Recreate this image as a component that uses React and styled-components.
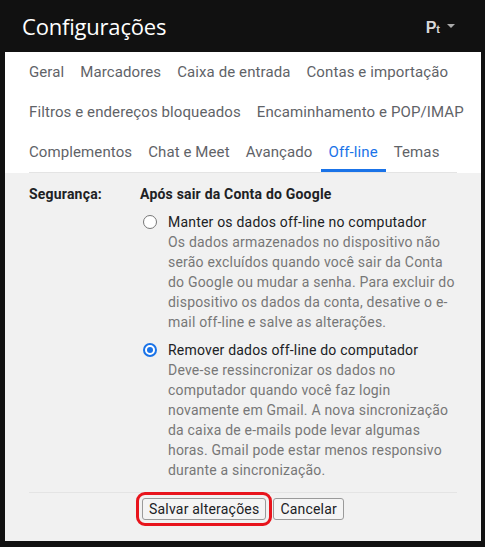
import React from "react"
import styled, { createGlobalStyle } from 'styled-components'

const GlobalStyle = createGlobalStyle`
    html, body {
        margin: 0;
        padding: 0;
        background: #111;
    }
    body {
        font-family: Roboto, 'Liberation Sans', Arial, sans-serif;
    }
`;

const Page = styled.div`
    width: 485px;
    height: 547px;
    background: #111;
    display: flex;
    flex-direction: column;
    box-sizing: border-box;
    padding: 0 4px 6px 5px;
`;

const Header = styled.header`
    height: 52px;
    flex-shrink: 0;
    display: flex;
    align-items: center;
    justify-content: space-between;
    padding: 0 26px 0 17px;
`;

const Title = styled.h1`
    margin: 0;
    font-family: 'Open Sans', Roboto, sans-serif;
    font-weight: 400;
    font-size: 22px;
    letter-spacing: -0.2px;
    color: #fff;
    padding-bottom: 1px;
`;

const Lang = styled.div`
    display: flex;
    align-items: center;
    gap: 7px;
    color: #d8d8d8;
    font-family: 'Liberation Sans', Arial, sans-serif;
    font-weight: 700;
    padding-top: 4px;
`;

const LangBig = styled.span`
    font-size: 16px;
`;

const LangSmall = styled.span`
    font-size: 11px;
`;

const Caret = styled.span`
    width: 0;
    height: 0;
    border-left: 4px solid transparent;
    border-right: 4px solid transparent;
    border-top: 4px solid #aaa;
    margin-top: -5px;
`;

const Panel = styled.main`
    flex: 1;
    display: flex;
    flex-direction: column;
    background: #f1f1f1;
`;

const TabBar = styled.div`
    background: #fff;
`;

const Tabs = styled.nav`
    display: flex;
    flex-wrap: wrap;
    padding: 0 8px 0 16px;
`;

const Tab = styled.a`
    height: 40px;
    box-sizing: border-box;
    display: flex;
    align-items: center;
    padding: 3px 8px 0;
    font-size: 15px;
    letter-spacing: 0.1px;
    color: ${props => props.active ? '#1a73e8' : '#5f6368'};
    border-bottom: 3px solid ${props => props.active ? '#1a73e8' : 'transparent'};
    text-decoration: none;
    white-space: nowrap;
    cursor: pointer;
`;

const Divider = styled.div`
    height: 1px;
    margin: 0 24px;
    background: #e4e4e4;
`;

const Content = styled.section`
    padding: 11px 24px 0;
    display: grid;
    grid-template-columns: 111px 1fr;
    font-size: 14px;
    line-height: 20px;
    letter-spacing: 0.2px;
    color: #202124;
`;

const Label = styled.div`
    font-weight: 700;
`;

const Options = styled.div`
    display: flex;
    flex-direction: column;
`;

const Heading = styled.div`
    font-weight: 700;
    margin-bottom: 8px;
`;

const Option = styled.label`
    display: grid;
    grid-template-columns: 28px 1fr;
    margin-bottom: 8px;
`;

const Radio = styled.span`
    width: 14px;
    height: 14px;
    box-sizing: border-box;
    border-radius: 50%;
    margin: 3px 0 0 3px;
    border: ${props => props.checked ? '2px solid #1a73e8' : '1px solid #767676'};
    background: #fff;
    display: flex;
    align-items: center;
    justify-content: center;

    &::after {
        content: '';
        display: ${props => props.checked ? 'block' : 'none'};
        width: 6px;
        height: 6px;
        border-radius: 50%;
        background: #1a73e8;
    }
`;

const OptionTitle = styled.div`
    color: #202124;
`;

const OptionText = styled.div`
    color: #777;
    width: 289px;
`;

const Footer = styled.div`
    margin: 4px 24px 0;
    border-top: 1px solid #e4e4e4;
    padding-top: 5px;
    display: flex;
    justify-content: center;
    gap: 7px;
`;

const Button = styled.button`
    height: 22px;
    padding: 0 6px;
    font-family: Roboto, 'Liberation Sans', Arial, sans-serif;
    font-size: 14px;
    letter-spacing: 0.2px;
    color: #202124;
    background: #f4f4f4;
    border: 1px solid #9a9a9a;
    border-radius: 3px;
    outline: ${props => props.highlight ? '3px solid #e8141c' : 'none'};
    outline-offset: 3px;
    cursor: pointer;
`;

const tabs = [
    'Geral', 'Marcadores', 'Caixa de entrada', 'Contas e importação',
    'Filtros e endereços bloqueados', 'Encaminhamento e POP/IMAP',
    'Complementos', 'Chat e Meet', 'Avançado', 'Off-line', 'Temas'
]

export default function App() {
    return (
        <Page>
            <GlobalStyle />
            <Header>
                <Title>Configurações</Title>
                <Lang>
                    <span><LangBig>P</LangBig><LangSmall>t</LangSmall></span>
                    <Caret />
                </Lang>
            </Header>
            <Panel>
                <TabBar>
                    <Tabs>
                        {tabs.map(t => (
                            <Tab key={t} active={t === 'Off-line' ? 1 : 0}>{t}</Tab>
                        ))}
                    </Tabs>
                    <Divider />
                </TabBar>
                <Content>
                    <Label>Segurança:</Label>
                    <Options>
                        <Heading>Após sair da Conta do Google</Heading>
                        <Option>
                            <Radio />
                            <div>
                                <OptionTitle>Manter os dados off-line no computador</OptionTitle>
                                <OptionText>
                                    Os dados armazenados no dispositivo não serão excluídos quando você sair da Conta do Google ou mudar a senha. Para excluir do dispositivo os dados da conta, desative o e-mail off-line e salve as alterações.
                                </OptionText>
                            </div>
                        </Option>
                        <Option>
                            <Radio checked />
                            <div>
                                <OptionTitle>Remover dados off-line do computador</OptionTitle>
                                <OptionText>
                                    Deve-se ressincronizar os dados no computador quando você faz login novamente em Gmail. A nova sincronização da caixa de e-mails pode levar algumas horas. Gmail pode estar menos responsivo durante a sincronização.
                                </OptionText>
                            </div>
                        </Option>
                    </Options>
                </Content>
                <Footer>
                    <Button highlight={1}>Salvar alterações</Button>
                    <Button>Cancelar</Button>
                </Footer>
            </Panel>
        </Page>
    );
}
